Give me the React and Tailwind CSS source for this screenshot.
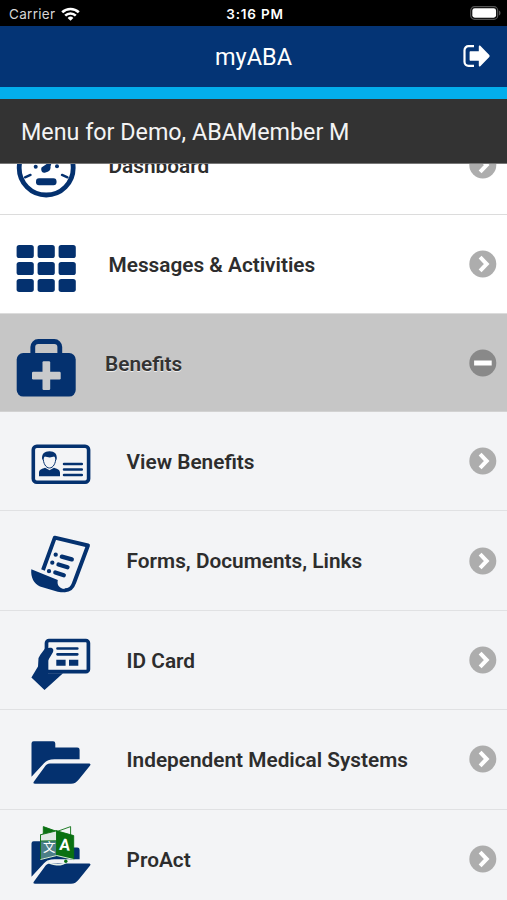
// src/App.jsx
import React from "react";

const NAVY = "#04316f";

const DashboardIcon = () => (
  <svg viewBox="0 0 60 60" className="h-15 w-15 overflow-visible" fill="none" stroke={NAVY}>
    <circle cx="30.2" cy="33" r="27" strokeWidth="4.8" />
    <rect x="20" y="43.3" width="20.5" height="7" rx="3" fill={NAVY} stroke="none" />
    <path d="M9 42.3l5.500-2.400M51.500 42.300l-5.500-2.400" strokeWidth="2.400" strokeLinecap="round" />
    <circle cx="19.7" cy="31.7" r="2" fill={NAVY} stroke="none" />
    <circle cx="41" cy="31.2" r="2" fill={NAVY} stroke="none" />
    <path d="M36.500 25l-11 7.500c-1 3 .5 6 4 5 4-.6 5.500-3 5-6z" fill={NAVY} stroke="none" />
  </svg>
);

const GridIcon = () => (
  <svg viewBox="0 0 60 60" className="h-15 w-15 overflow-visible" fill={NAVY}>
    {[0, 1, 2].map((row) =>
      [0, 1, 2].map((col) => (
        <rect
          key={`${row}-${col}`}
          x={0.6 + col * 21}
          y={11.1 + row * 16.9}
          width="17.2"
          height="13"
          rx="2.6"
        />
      ))
    )}
  </svg>
);

const MedkitIcon = () => (
  <svg viewBox="0 0 60 60" className="h-15 w-15 overflow-visible">
    <path
      d="M16.800 22.500v-8.500a5.500 5.500 0 0 1 5.500-5.500h16a5.500 5.500 0 0 1 5.500 5.500v8.500"
      fill="none"
      stroke={NAVY}
      strokeWidth="4.800"
    />
    <rect x="0.7" y="20.1" width="59" height="43.5" rx="6.5" fill={NAVY} />
    <g fill="#c9cacc">
      <rect x="26.500" y="28.200" width="7.700" height="28.800" rx="1.200" />
      <rect x="16" y="38.700" width="28.700" height="7.800" rx="1.200" />
    </g>
  </svg>
);

const IdentityIcon = () => (
  <svg viewBox="0 0 60 60" className="h-15 w-15 overflow-visible">
    <rect x="2.300" y="15.300" width="55.300" height="36" rx="3.500" fill="none" stroke={NAVY} strokeWidth="3.600" />
    <path
      d="M8 45.300v-3.500c0-3 3-4 6-5l4.500 2.500 4.500-2.500c3 1 6 2 6 5v3.500z"
      fill={NAVY}
    />
    <path
      d="M12.200 27c0 5 2.500 10 6.300 10s6.300-5 6.300-10c0-2-2-3.500-6.300-3.500s-6.300 1.500-6.300 3.500z"
      fill="#f3f4f6"
      stroke={NAVY}
      strokeWidth="1"
    />
    <path d="M11.300 29c-1.200-6 2.200-8.700 7.200-8.700s8.200 2.700 7 8.700l-2.200-3.400c-3.500 1.300-6.800.8-9.600 0z" fill={NAVY} />
    <path d="M33 33h17.800M33 38.500h17.800M33 44h17.800" stroke={NAVY} strokeWidth="2.500" strokeLinecap="round" />
  </svg>
);

const FormsIcon = () => (
  <svg viewBox="0 0 60 60" className="h-15 w-15 overflow-visible">
    <path
      d="M12 39L23.800 6.700 57 14.500 43 52c-1.500 4.500-4.500 7.500-9.500 7.300"
      fill="none"
      stroke={NAVY}
      strokeWidth="3.900"
      strokeLinejoin="round"
    />
    <path
      d="M.3 38.200l26.500 10.700c-1 4.500 1 8.500 7 9l.8 3.200c-3.600.5-6 .2-9.600-.8L9 55.500C3 52.500-.5 46.500.3 38.200z"
      fill={NAVY}
    />
    <g stroke={NAVY} strokeWidth="4.300" strokeLinecap="round">
      <path d="M30.800 25.700l10 2.700M27.500 33.500l9 2.700M24.300 41.500l8.500 2.700" />
      <path d="M24.700 23.700h.01M21.300 31.700h.01M18 40.200h.01" />
    </g>
  </svg>
);

const IdCardIcon = () => (
  <svg viewBox="0 0 60 60" className="h-15 w-15 overflow-visible">
    <rect x="15.500" y="10.500" width="41.900" height="31.200" rx="2.500" fill="none" stroke={NAVY} strokeWidth="3.700" />
    <path
      d="M14 18.500l-4.500 6-2 3.500-.5 8.500L.4 47.500 13.500 60 32 43.200H17V30.500l4.800-8c1.500-3-.3-5-3-4.700z"
      fill={NAVY}
    />
    <path d="M26.500 18.500h19.800M26.500 24.300h19.800" stroke={NAVY} strokeWidth="2.700" strokeLinecap="round" />
    <path d="M25.300 29.800h9.300v6h-9.300zM38 29.800h9.300v6H38z" fill={NAVY} />
  </svg>
);

const FolderShape = () => (
  <g fill={NAVY}>
    <path d="M.5 47.800V14.500a2.200 2.200 0 0 1 2.200-2.200h19.400a2.200 2.200 0 0 1 2.200 2.200v4h22a2.300 2.300 0 0 1 2.300 2.300v9.500H23.500c-5 0-8 1.500-10.500 4z" />
    <path d="M19 34.600h39.200c1.300 0 1.700 1 .9 2L48 50.300c-2.700 3.300-4.500 4.400-8 4.400H4c-1.500 0-2-1-1.200-2L13 38.700c2-2.800 3.500-4.100 6-4.100z" />
  </g>
);

const FolderIcon = () => (
  <svg viewBox="0 0 60 60" className="h-15 w-15 overflow-visible">
    <FolderShape />
  </svg>
);

const TranslateFolderIcon = () => (
  <svg viewBox="0 0 60 60" className="h-15 w-15 overflow-visible">
    <FolderShape />
    <g stroke="#0a7012" strokeWidth="0.9" strokeLinejoin="round">
      <path d="M12.300-2.400L26 2.500 12.300 6.500z" fill="#0a7012" />
      <path d="M39.600-2.400L26 2.500l13.600 5z" fill="#f3f4f6" />
      <path d="M9.500 5.800l16.200-4v24.800L9.500 30.500z" fill="#4c7f88" />
      <path d="M9.500 5.800l16.200-4v10L9.500 12z" fill="#dfe8e4" />
      <path d="M25.700 1.800l17 4.800v24l-17-4z" fill="#0a7012" />
      <path d="M9.500 30.500l16.200-4 17 4" fill="none" stroke="#f3f4f6" />
    </g>
    <path d="M16 32c4 4.500 15 5 19.500.8" fill="none" stroke="#e9f3ea" strokeWidth="1.600" />
    <circle cx="34.800" cy="32.300" r="1.700" fill="#0a7012" />
    <text x="12" y="23" fontSize="12.500" fill="#ffffff" fontFamily="Noto Sans CJK SC, sans-serif">
      文
    </text>
    <text x="28.500" y="21.200" fontSize="16" fontWeight="700" fill="#ffffff" fontFamily="Roboto, sans-serif" transform="rotate(5 34 16)">
      A
    </text>
  </svg>
);

const ChevronBadge = () => (
  <svg viewBox="0 0 28 28" className="h-7 w-7 shrink-0">
    <circle cx="13.800" cy="14" r="13.500" fill="#adadad" />
    <path d="M11.100 7.200l6.600 6.800-6.600 6.800" fill="none" stroke="#fff" strokeWidth="4" />
  </svg>
);

const MinusBadge = () => (
  <svg viewBox="0 0 28 28" className="h-7 w-7 shrink-0">
    <circle cx="13.800" cy="14" r="13.500" fill="#898989" />
    <rect x="5.100" y="11.500" width="17.600" height="5" fill="#fff" />
  </svg>
);

const StatusBar = () => (
  <div className="grid h-[25.5px] grid-cols-[1fr_auto_1fr] items-center bg-black pr-1.5 pl-[9px] font-['Inter'] text-white">
    <div className="flex items-center gap-1.5 pt-0.5 text-[13.5px] text-[#d6d6d6]">
      <span className="tracking-[0.3px]">Carrier</span>
      <svg viewBox="0 0 19 14" className="h-3.5 w-[19px]" fill="none" stroke="#fff" strokeWidth="2.6">
        <path d="M1.200 5.300a12 12 0 0 1 16.600 0" />
        <path d="M4.200 8.600a7.600 7.600 0 0 1 10.600 0" />
        <path d="M9.500 13.800L6.600 10.900a4.200 4.200 0 0 1 5.800 0z" fill="#fff" stroke="none" />
      </svg>
    </div>
    <div className="pt-0.5 text-[13.5px] font-semibold tracking-[0.8px] whitespace-nowrap">3:16 PM</div>
    <div className="flex justify-end">
      <svg viewBox="0 0 31 14" className="h-3.5 w-[31px]">
        <rect x="0.7" y="0.7" width="27" height="12.6" rx="3.8" fill="none" stroke="#555" strokeWidth="1.2" />
        <rect x="2.3" y="2.3" width="23.8" height="9.4" rx="2.4" fill="#fff" />
        <path d="M29 4.500c2 .8 2 4.200 0 5z" fill="#555" />
      </svg>
    </div>
  </div>
);

const Header = () => (
  <header className="grid h-[61.5px] grid-cols-[1fr_auto_1fr] items-center bg-[#043475] text-white">
    <span />
    <h1 className="pt-0.5 text-[23.5px]">myABA</h1>
    <svg viewBox="0 0 28 24" className="mr-[17px] h-6 w-7 justify-self-end">
      <path d="M12 2.200H6.500A4 4 0 0 0 2.500 6.200v11.600a4 4 0 0 0 4 4H12" fill="none" stroke="#fff" strokeWidth="2.200" />
      <path d="M8.600 7.300h8.200V2.400c0-1 .8-1.300 1.500-.6l9 9.300c.5.600.5 1.200 0 1.800l-9 9.300c-.7.700-1.500.4-1.500-.6v-4.900H8.600c-.7 0-1-.4-1-1V8.300c0-.6.300-1 1-1z" fill="#fff" />
    </svg>
  </header>
);

const menuItems = [
  { label: "Dashboard", icon: DashboardIcon },
  { label: "Messages & Activities", icon: GridIcon },
];

const benefitItems = [
  { label: "View Benefits", icon: IdentityIcon },
  { label: "Forms, Documents, Links", icon: FormsIcon },
  { label: "ID Card", icon: IdCardIcon },
  { label: "Independent Medical Systems", icon: FolderIcon },
  { label: "ProAct", icon: TranslateFolderIcon },
];

export default function App() {
  return (
    <div className="flex h-screen w-full flex-col overflow-hidden bg-white font-['Roboto',sans-serif] text-[#2d2d2d]">
      <StatusBar />
      <Header />
      <div className="h-3 shrink-0 bg-[#03aeec]" />
      <div className="flex h-[65px] shrink-0 items-center border-b border-[#777] bg-[#333] pt-[3px] pl-[21px] text-[23.3px] text-[#f4f4f4]">
        Menu for Demo, ABAMember M
      </div>

      <div className="min-h-0 flex-1 overflow-hidden">
        {/* list is scrolled, so the first row is partly hidden */}
        <ul className="-mt-[48.4px]">
          {menuItems.map(({ label, icon: Icon }) => (
            <li
              key={label}
              className="flex h-[99.4px] items-center border-b border-[#dcdcdc] pr-[10.5px] pl-4"
            >
              <Icon />
              <span className="ml-[32.5px] flex-1 pt-[3px] text-[20.8px] font-semibold">{label}</span>
              <ChevronBadge />
            </li>
          ))}
          <li className="flex h-[97.6px] items-center border-b border-[#d2d2d2] bg-[#c6c6c6] pr-[10.5px] pl-4">
            <MedkitIcon />
            <span className="ml-[29px] flex-1 pt-1 text-[20.8px] font-semibold text-[#333] [text-shadow:0_1px_0_#eee]">
              Benefits
            </span>
            <MinusBadge />
          </li>
          {benefitItems.map(({ label, icon: Icon }) => (
            <li
              key={label}
              className="flex h-[99.4px] items-center border-b border-[#e0e1e3] bg-[#f3f4f6] pr-[10.5px] pl-[30.6px]"
            >
              <Icon />
              <span className="ml-9 flex-1 pt-[3px] text-[20.8px] font-semibold">{label}</span>
              <ChevronBadge />
            </li>
          ))}
        </ul>
      </div>
    </div>
  );
}
